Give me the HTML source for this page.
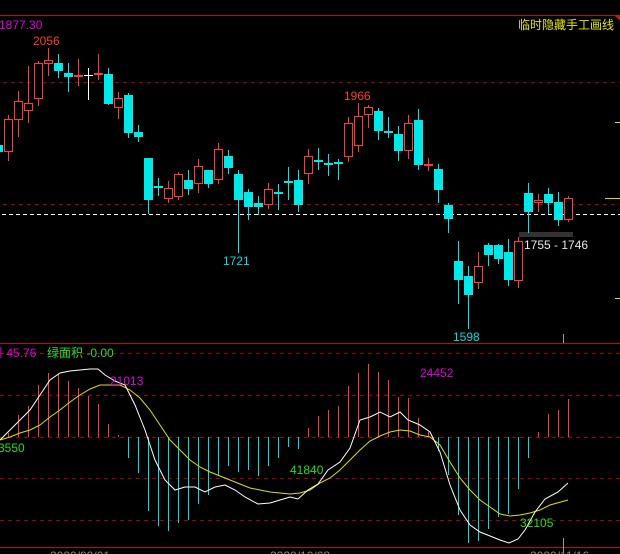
<!DOCTYPE html>
<html><head><meta charset="utf-8"><style>
html,body{margin:0;padding:0;background:#000;width:620px;height:554px;overflow:hidden}
svg{display:block}
text{font-family:"Liberation Sans","Noto Sans CJK SC",sans-serif;font-size:12px}
</style></head><body>
<svg width="620" height="554" viewBox="0 0 620 554" xmlns="http://www.w3.org/2000/svg">
<rect width="620" height="554" fill="#000"/>
<line x1="0" y1="15.5" x2="620" y2="15.5" stroke="#b01010" stroke-width="1"/>
<polygon points="614,15 620,15 620,21" fill="#c01818"/>
<line x1="0" y1="343.5" x2="620" y2="343.5" stroke="#b01010"/>
<line x1="0" y1="547.5" x2="620" y2="547.5" stroke="#b01010"/>
<g stroke="#a00000" stroke-dasharray="4,4" stroke-width="1">
<line x1="3" y1="82.5" x2="620" y2="82.5"/>
<line x1="3" y1="204.5" x2="620" y2="204.5"/>
<line x1="0" y1="353.5" x2="620" y2="353.5"/>
<line x1="0" y1="395.5" x2="620" y2="395.5"/>
<line x1="0" y1="437.5" x2="620" y2="437.5"/>
<line x1="0" y1="478.5" x2="620" y2="478.5"/>
<line x1="0" y1="520.5" x2="620" y2="520.5"/>
</g>
<line x1="2" y1="214.5" x2="620" y2="214.5" stroke="#fff" stroke-dasharray="4,3"/>
<g stroke="#e0e000"><line x1="615" y1="122.5" x2="620" y2="122.5"/><line x1="605" y1="198.5" x2="620" y2="198.5"/><line x1="615" y1="298.5" x2="620" y2="298.5"/></g>
<line x1="563.5" y1="334" x2="563.5" y2="343" stroke="#999"/>
<line x1="563.5" y1="538" x2="563.5" y2="554" stroke="#999"/>
<rect x="519" y="232" width="54" height="5" fill="#333"/>

<g stroke="#ff3a3a" stroke-width="1">
<line x1="8.5" y1="115" x2="8.5" y2="161"/><line x1="18.5" y1="91" x2="18.5" y2="137"/><line x1="28.5" y1="66" x2="28.5" y2="123"/><line x1="38.5" y1="61" x2="38.5" y2="106"/><line x1="48.5" y1="48" x2="48.5" y2="76"/><line x1="78.5" y1="59" x2="78.5" y2="86"/><line x1="98.5" y1="54" x2="98.5" y2="80"/><line x1="118.5" y1="92" x2="118.5" y2="119"/><line x1="168.5" y1="181" x2="168.5" y2="203"/><line x1="178.5" y1="172" x2="178.5" y2="200"/><line x1="198.5" y1="159" x2="198.5" y2="193"/><line x1="218.5" y1="143" x2="218.5" y2="184"/><line x1="268.5" y1="183" x2="268.5" y2="209"/><line x1="308.5" y1="149" x2="308.5" y2="184"/><line x1="348.5" y1="117" x2="348.5" y2="162"/><line x1="358.5" y1="103" x2="358.5" y2="152"/><line x1="368.5" y1="105" x2="368.5" y2="128"/><line x1="408.5" y1="115" x2="408.5" y2="159"/><line x1="428.5" y1="158" x2="428.5" y2="171"/><line x1="478.5" y1="252" x2="478.5" y2="289"/><line x1="518.5" y1="237" x2="518.5" y2="288"/><line x1="538.5" y1="194" x2="538.5" y2="212"/><line x1="568.5" y1="196" x2="568.5" y2="222"/>
</g>
<g stroke="#00e8e8" stroke-width="1">
<line x1="58.5" y1="54" x2="58.5" y2="78"/><line x1="68.5" y1="63" x2="68.5" y2="92"/><line x1="108.5" y1="68" x2="108.5" y2="105"/><line x1="128.5" y1="93" x2="128.5" y2="138"/><line x1="138.5" y1="125" x2="138.5" y2="142"/><line x1="148.5" y1="158" x2="148.5" y2="214"/><line x1="158.5" y1="178" x2="158.5" y2="196"/><line x1="188.5" y1="170" x2="188.5" y2="195"/><line x1="208.5" y1="170" x2="208.5" y2="188"/><line x1="228.5" y1="150" x2="228.5" y2="174"/><line x1="238.5" y1="170" x2="238.5" y2="253"/><line x1="248.5" y1="189" x2="248.5" y2="220"/><line x1="258.5" y1="196" x2="258.5" y2="215"/><line x1="278.5" y1="184" x2="278.5" y2="210"/><line x1="288.5" y1="167" x2="288.5" y2="200"/><line x1="298.5" y1="170" x2="298.5" y2="212"/><line x1="318.5" y1="148" x2="318.5" y2="170"/><line x1="328.5" y1="154" x2="328.5" y2="176"/><line x1="338.5" y1="159" x2="338.5" y2="180"/><line x1="378.5" y1="108" x2="378.5" y2="140"/><line x1="388.5" y1="117" x2="388.5" y2="138"/><line x1="398.5" y1="126" x2="398.5" y2="161"/><line x1="418.5" y1="109" x2="418.5" y2="170"/><line x1="438.5" y1="164" x2="438.5" y2="203"/><line x1="448.5" y1="203" x2="448.5" y2="233"/><line x1="458.5" y1="241" x2="458.5" y2="304"/><line x1="468.5" y1="266" x2="468.5" y2="329"/><line x1="488.5" y1="243" x2="488.5" y2="266"/><line x1="498.5" y1="244" x2="498.5" y2="264"/><line x1="508.5" y1="239" x2="508.5" y2="286"/><line x1="528.5" y1="183" x2="528.5" y2="233"/><line x1="548.5" y1="188" x2="548.5" y2="214"/><line x1="558.5" y1="192" x2="558.5" y2="226"/>
</g>
<line x1="88.5" y1="68" x2="88.5" y2="100" stroke="#fff"/>
<line x1="84" y1="75.5" x2="93" y2="75.5" stroke="#fff"/>
<rect x="0" y="145" width="3" height="7" fill="#00e8e8"/>
<g fill="#000" stroke="#ff3a3a" stroke-width="1">
<rect x="4.5" y="119.5" width="8" height="32"/><rect x="14.5" y="101.5" width="8" height="18"/><rect x="24.5" y="103.5" width="8" height="7"/><rect x="34.5" y="63.5" width="8" height="35"/><rect x="44.5" y="60.5" width="8" height="3"/><rect x="114.5" y="98.5" width="8" height="9"/><rect x="164.5" y="188.5" width="8" height="10"/><rect x="174.5" y="174.5" width="8" height="22"/><rect x="194.5" y="166.5" width="8" height="17"/><rect x="214.5" y="149.5" width="8" height="30"/><rect x="264.5" y="189.5" width="8" height="15"/><rect x="304.5" y="156.5" width="8" height="17"/><rect x="344.5" y="123.5" width="8" height="33"/><rect x="354.5" y="116.5" width="8" height="29"/><rect x="364.5" y="107.5" width="8" height="7"/><rect x="404.5" y="123.5" width="8" height="27"/><rect x="474.5" y="266.5" width="8" height="16"/><rect x="514.5" y="241.5" width="8" height="39"/><rect x="534.5" y="200.5" width="8" height="2"/><rect x="564.5" y="198.5" width="8" height="21"/>
</g>
<g fill="#ff3a3a"><rect x="74" y="75" width="9" height="2"/><rect x="94" y="73" width="9" height="2"/><rect x="424" y="164" width="9" height="2"/></g>
<g fill="#00e8e8">
<rect x="54" y="63" width="9" height="8"/><rect x="64" y="73" width="9" height="4"/><rect x="104" y="74" width="9" height="30"/><rect x="124" y="95" width="9" height="38"/><rect x="134" y="132" width="9" height="5"/><rect x="144" y="158" width="9" height="42"/><rect x="154" y="186" width="9" height="2"/><rect x="184" y="180" width="9" height="9"/><rect x="204" y="170" width="9" height="14"/><rect x="224" y="156" width="9" height="12"/><rect x="234" y="174" width="9" height="26"/><rect x="244" y="192" width="9" height="15"/><rect x="254" y="203" width="9" height="4"/><rect x="274" y="192" width="9" height="2"/><rect x="284" y="181" width="9" height="2"/><rect x="294" y="180" width="9" height="25"/><rect x="314" y="160" width="9" height="2"/><rect x="324" y="163" width="9" height="2"/><rect x="334" y="162" width="9" height="2"/><rect x="374" y="111" width="9" height="20"/><rect x="384" y="131" width="9" height="2"/><rect x="394" y="134" width="9" height="17"/><rect x="414" y="120" width="9" height="45"/><rect x="434" y="169" width="9" height="21"/><rect x="444" y="205" width="9" height="14"/><rect x="454" y="261" width="9" height="19"/><rect x="464" y="276" width="9" height="19"/><rect x="484" y="245" width="9" height="10"/><rect x="494" y="245" width="9" height="14"/><rect x="504" y="252" width="9" height="28"/><rect x="524" y="193" width="9" height="19"/><rect x="544" y="194" width="9" height="9"/><rect x="554" y="202" width="9" height="18"/>
</g>

<text x="-1" y="29" fill="#e000e0" font-size="13">1877.30</text>
<text x="33" y="45" fill="#ff3a3a">2056</text>
<text x="344" y="100" fill="#ff3a3a">1966</text>
<text x="223" y="265" fill="#00e0e0">1721</text>
<text x="453" y="341" fill="#00e0e0">1598</text>
<text x="524" y="249" fill="#e8e8e8" font-size="12.5">1755 - 1746</text>
<text x="518" y="29" fill="#e8e800" font-size="12.5">临时隐藏手工画线</text>

<g stroke="#ff3a3a" stroke-width="1">
<line x1="8.5" y1="433" x2="8.5" y2="437"/><line x1="18.5" y1="415" x2="18.5" y2="437"/><line x1="28.5" y1="406" x2="28.5" y2="437"/><line x1="38.5" y1="385" x2="38.5" y2="437"/><line x1="48.5" y1="373" x2="48.5" y2="437"/><line x1="58.5" y1="374" x2="58.5" y2="437"/><line x1="68.5" y1="381" x2="68.5" y2="437"/><line x1="78.5" y1="388" x2="78.5" y2="437"/><line x1="88.5" y1="396" x2="88.5" y2="437"/><line x1="98.5" y1="404" x2="98.5" y2="437"/><line x1="108.5" y1="424" x2="108.5" y2="437"/><line x1="118.5" y1="435" x2="118.5" y2="437"/>
<line x1="308.5" y1="428" x2="308.5" y2="437"/><line x1="318.5" y1="416" x2="318.5" y2="437"/><line x1="328.5" y1="410" x2="328.5" y2="437"/><line x1="338.5" y1="406" x2="338.5" y2="437"/><line x1="348.5" y1="386" x2="348.5" y2="437"/><line x1="358.5" y1="373" x2="358.5" y2="437"/><line x1="368.5" y1="364" x2="368.5" y2="437"/><line x1="378.5" y1="372" x2="378.5" y2="437"/><line x1="388.5" y1="380" x2="388.5" y2="437"/><line x1="398.5" y1="397" x2="398.5" y2="437"/><line x1="408.5" y1="398" x2="408.5" y2="437"/><line x1="418.5" y1="418" x2="418.5" y2="437"/><line x1="428.5" y1="432" x2="428.5" y2="437"/>
<line x1="538.5" y1="432" x2="538.5" y2="437"/><line x1="548.5" y1="414" x2="548.5" y2="437"/><line x1="558.5" y1="410" x2="558.5" y2="437"/><line x1="568.5" y1="399" x2="568.5" y2="437"/>
</g>
<g stroke="#00e0e0" stroke-width="1">
<line x1="128.5" y1="437" x2="128.5" y2="458"/><line x1="138.5" y1="437" x2="138.5" y2="473"/><line x1="148.5" y1="437" x2="148.5" y2="511"/><line x1="158.5" y1="437" x2="158.5" y2="526"/><line x1="168.5" y1="437" x2="168.5" y2="531"/><line x1="178.5" y1="437" x2="178.5" y2="523"/><line x1="188.5" y1="437" x2="188.5" y2="520"/><line x1="198.5" y1="437" x2="198.5" y2="504"/><line x1="208.5" y1="437" x2="208.5" y2="495"/><line x1="218.5" y1="437" x2="218.5" y2="475"/><line x1="228.5" y1="437" x2="228.5" y2="466"/><line x1="238.5" y1="437" x2="238.5" y2="472"/><line x1="248.5" y1="437" x2="248.5" y2="470"/><line x1="258.5" y1="437" x2="258.5" y2="476"/><line x1="268.5" y1="437" x2="268.5" y2="466"/><line x1="278.5" y1="437" x2="278.5" y2="458"/><line x1="288.5" y1="437" x2="288.5" y2="447"/><line x1="298.5" y1="437" x2="298.5" y2="449"/>
<line x1="438.5" y1="437" x2="438.5" y2="451"/><line x1="448.5" y1="437" x2="448.5" y2="475"/><line x1="458.5" y1="437" x2="458.5" y2="515"/><line x1="468.5" y1="437" x2="468.5" y2="543"/><line x1="478.5" y1="437" x2="478.5" y2="541"/><line x1="488.5" y1="437" x2="488.5" y2="529"/><line x1="498.5" y1="437" x2="498.5" y2="517"/><line x1="508.5" y1="437" x2="508.5" y2="514"/><line x1="518.5" y1="437" x2="518.5" y2="489"/><line x1="528.5" y1="437" x2="528.5" y2="458"/>
</g>
<polyline fill="none" stroke="#e0e000" stroke-width="1" points="0,440 10,437 20,433 30,430 40,425 50,417 60,410 70,402 80,395 90,389 100,385 110,385 120,385 130,390 140,398 150,410 160,425 170,440 180,450 190,460 200,467 210,472 220,476 230,480 240,484 250,488 260,490 270,492 280,493 290,494 300,493 310,490 320,483 330,478 340,470 350,460 360,450 370,441 380,436 390,432 400,430 410,431 420,435 430,437 440,445 450,462 460,478 470,490 480,500 490,507 500,514 510,516 520,515 530,513 540,510 550,505 568,500"/>
<polyline fill="none" stroke="#ffffff" stroke-width="1" points="0,440 10,430 20,420 30,410 40,395 50,380 60,373 70,371 80,370 90,369 98,369 105,375 115,381 125,385 135,405 145,430 155,460 165,480 175,490 185,487 195,487 205,492 215,487 225,485 235,490 245,497 258,504 270,503 280,500 290,497 298,499 308,490 318,484 328,470 340,462 350,448 360,420 370,417 380,412 390,417 400,412 408,420 420,425 430,432 440,452 450,485 460,510 470,525 480,532 490,536 500,540 509,543 518,539 525,530 535,512 545,499 558,492 568,483"/>

<text x="-9" y="357" fill="#e000e0" font-size="12.5">引 45.76</text>
<text x="47" y="357" fill="#20e020" font-size="12.5">绿面积 -0.00</text>
<text x="110" y="385" fill="#e000e0" font-size="12.5">21013</text>
<text x="-2" y="452" fill="#20e020" font-size="12.5">3550</text>
<text x="290" y="474" fill="#20e020" font-size="12.5">41840</text>
<text x="420" y="377" fill="#e000e0" font-size="12.5">24452</text>
<text x="520" y="527" fill="#20e020" font-size="12.5">32105</text>
<text x="50" y="560" fill="#888" font-size="12">2020/09/01</text>
<text x="270" y="560" fill="#888" font-size="12">2020/10/08</text>
<text x="530" y="560" fill="#888" font-size="12">2020/11/16</text>
</svg>
</body></html>
